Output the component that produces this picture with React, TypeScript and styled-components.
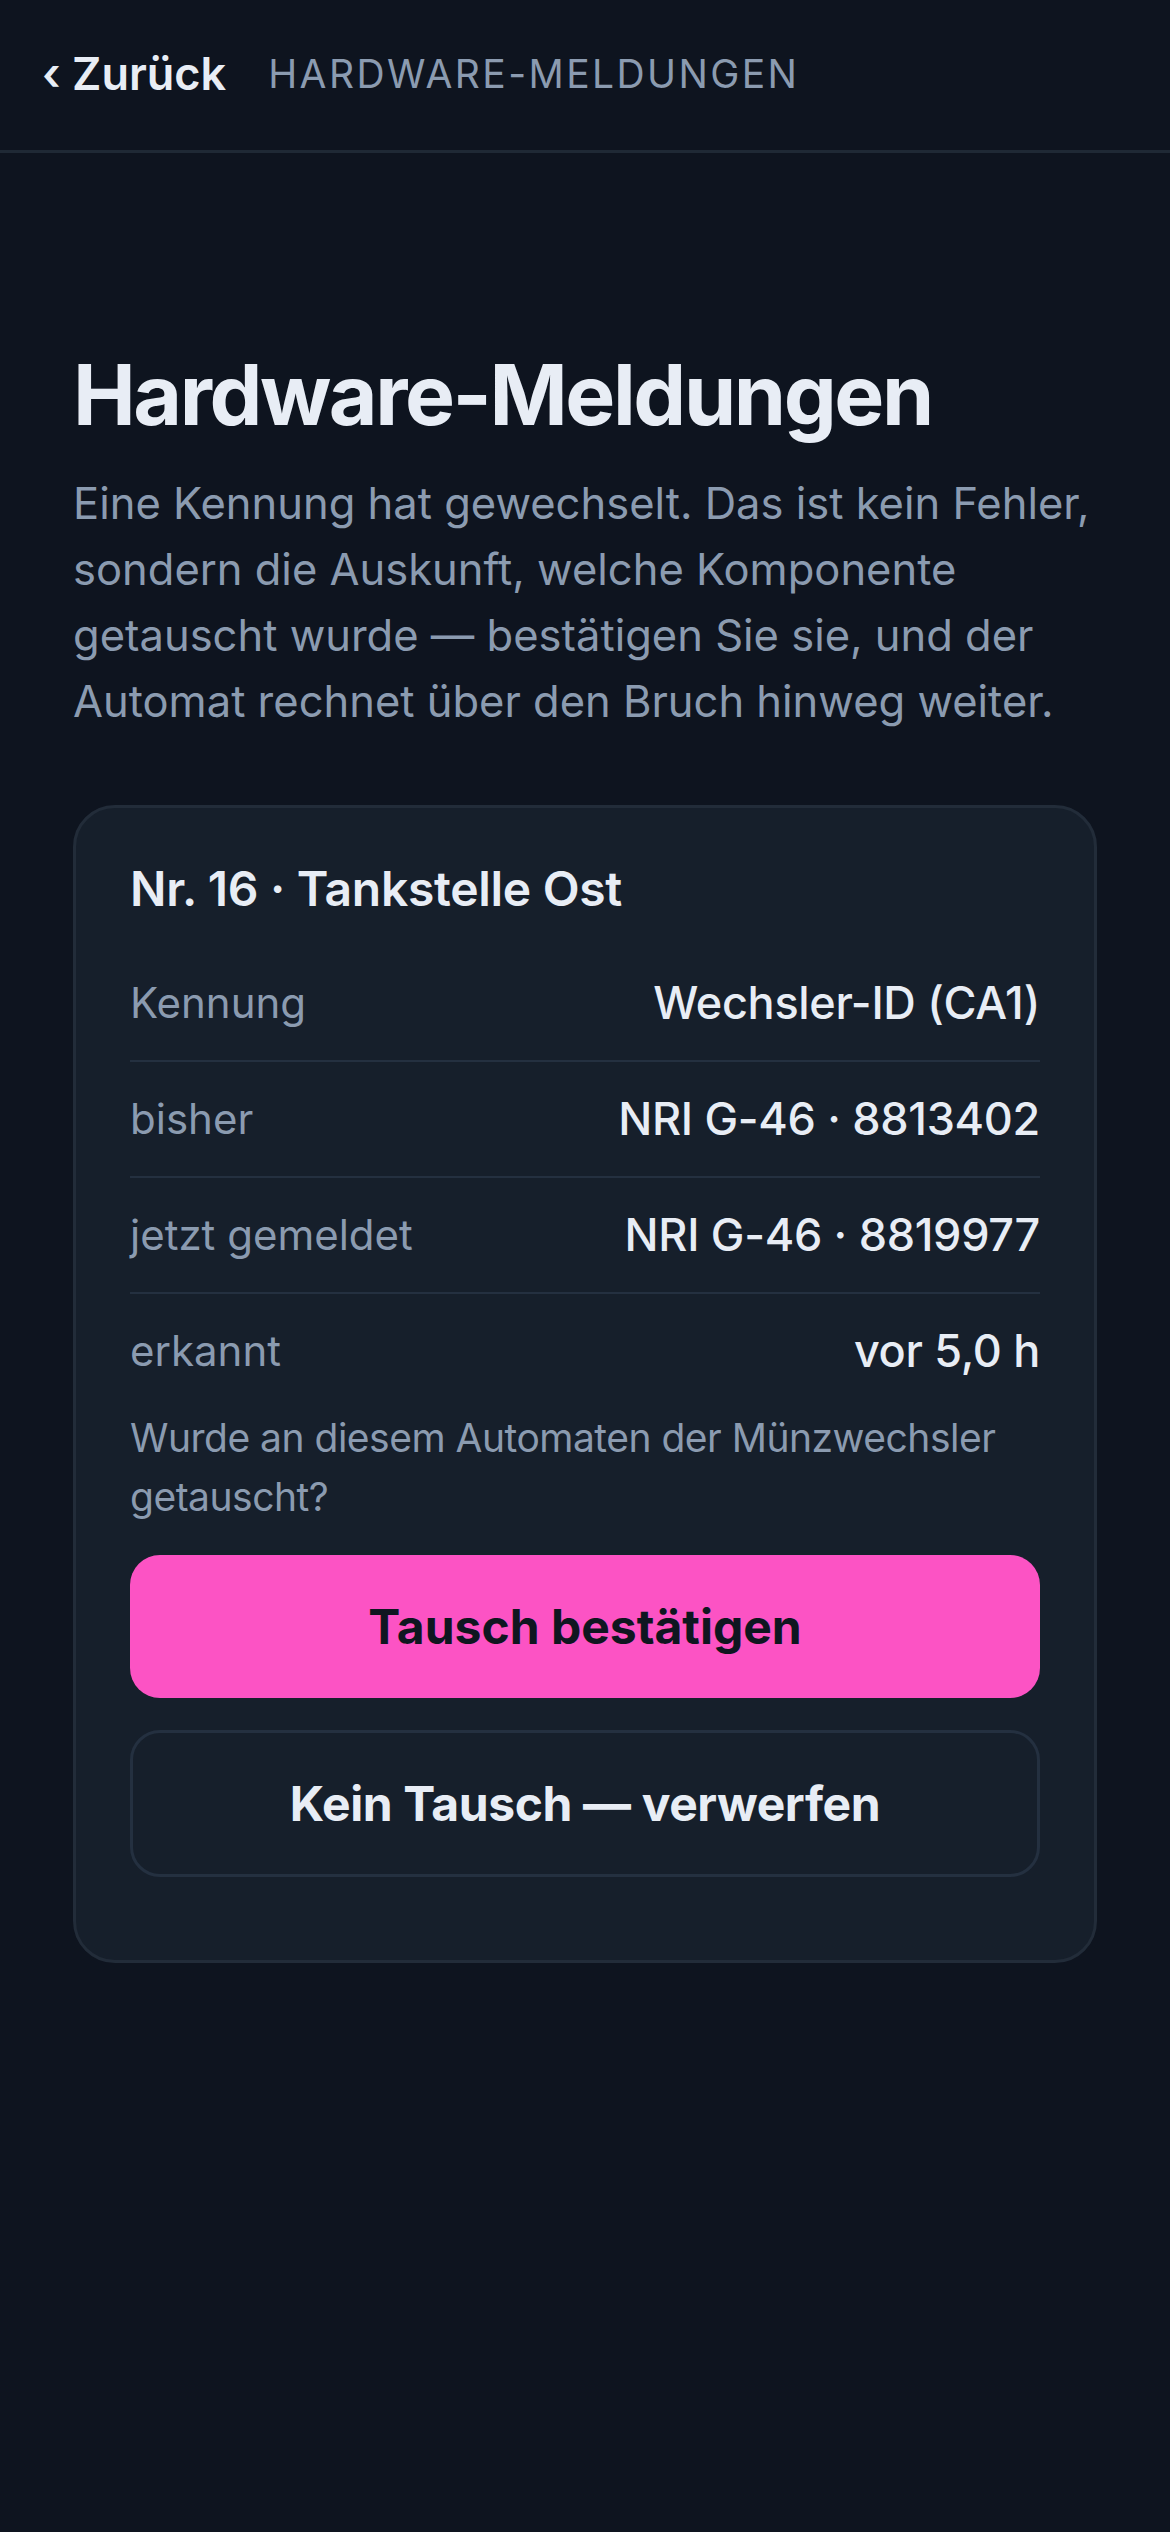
import React from "react";
import styled, { createGlobalStyle } from "styled-components";

const GlobalStyle = createGlobalStyle`
  html, body {
    margin: 0;
    padding: 0;
    background: #0e141f;
  }
  body {
    font-family: Inter, "Noto Sans", "Liberation Sans", sans-serif;
    color: #e8edf5;
    -webkit-font-smoothing: antialiased;
  }
  * {
    box-sizing: border-box;
  }
`;

const Page = styled.div`
  min-height: 2532px;
  background: #0e141f;
`;

const TopBar = styled.header`
  height: 153px;
  display: flex;
  align-items: center;
  gap: 42px;
  padding: 0 42px 3px;
  border-bottom: 3px solid #1f2935;
`;

const BackLink = styled.button`
  border: none;
  background: none;
  padding: 0;
  font-family: inherit;
  font-size: 45px;
  font-weight: 600;
  color: #e8edf5;
  cursor: pointer;
`;

const TopTitle = styled.span`
  font-size: 39px;
  font-weight: 400;
  letter-spacing: 2.4px;
  text-transform: uppercase;
  color: #8b9bb0;
`;

const Main = styled.main`
  padding: 192px 73px 0;
`;

const Heading = styled.h1`
  margin: 0;
  font-size: 84px;
  line-height: 1.2;
  font-weight: 700;
  letter-spacing: -2.4px;
  color: #e8edf5;
`;

const Lead = styled.p`
  margin: 24px 0 0;
  font-size: 43.5px;
  line-height: 66px;
  color: #8b9bb0;
`;

const Card = styled.section`
  margin-top: 71px;
  background: #161f2b;
  border: 3px solid #222c39;
  border-radius: 42px;
  padding: 50px 54px 83px;
`;

const CardTitle = styled.h2`
  margin: 0 0 26px;
  font-size: 48px;
  line-height: 62px;
  font-weight: 600;
  letter-spacing: -0.3px;
  color: #e8edf5;
`;

const Row = styled.div`
  display: flex;
  justify-content: space-between;
  align-items: center;
  padding: 24px 0;
  line-height: 66px;
  border-bottom: 2px solid #243040;

  &:last-of-type {
    border-bottom: none;
  }
`;

const Label = styled.span`
  font-size: 42px;
  color: #8b9bb0;
`;

const Value = styled.span`
  font-size: 45px;
  font-weight: 500;
  letter-spacing: -0.3px;
  color: #e8edf5;
`;

const Question = styled.p`
  margin: 0;
  font-size: 39px;
  line-height: 59px;
  letter-spacing: -0.5px;
  color: #8b9bb0;
`;

const ActionButton = styled.button<{ $primary?: boolean }>`
  display: flex;
  align-items: center;
  justify-content: center;
  width: 100%;
  font-family: inherit;
  font-size: 48px;
  font-weight: 700;
  letter-spacing: ${(p) => (p.$primary ? "0" : "-0.4px")};
  cursor: pointer;
  border-radius: 30px;
  margin-top: ${(p) => (p.$primary ? "29px" : "32px")};
  height: ${(p) => (p.$primary ? "143px" : "147px")};
  background: ${(p) => (p.$primary ? "#fc53c4" : "transparent")};
  color: ${(p) => (p.$primary ? "#0f1620" : "#e8edf5")};
  border: ${(p) => (p.$primary ? "none" : "3px solid #243040")};
`;

const rows = [
  { label: "Kennung", value: "Wechsler-ID (CA1)" },
  { label: "bisher", value: "NRI G-46 · 8813402" },
  { label: "jetzt gemeldet", value: "NRI G-46 · 8819977" },
  { label: "erkannt", value: "vor 5,0 h" },
];

export default function App() {
  return (
    <Page>
      <GlobalStyle />
      <TopBar>
        <BackLink>‹ Zurück</BackLink>
        <TopTitle>Hardware-Meldungen</TopTitle>
      </TopBar>
      <Main>
        <Heading>Hardware-Meldungen</Heading>
        <Lead>
          Eine Kennung hat gewechselt. Das ist kein Fehler, sondern die
          Auskunft, welche Komponente getauscht wurde — bestätigen Sie sie, und
          der Automat rechnet über den Bruch hinweg weiter.
        </Lead>
        <Card>
          <CardTitle>Nr. 16 · Tankstelle Ost</CardTitle>
          <div>
            {rows.map((r) => (
              <Row key={r.label}>
                <Label>{r.label}</Label>
                <Value>{r.value}</Value>
              </Row>
            ))}
          </div>
          <Question>
            Wurde an diesem Automaten der Münzwechsler getauscht?
          </Question>
          <ActionButton $primary>Tausch bestätigen</ActionButton>
          <ActionButton>Kein Tausch — verwerfen</ActionButton>
        </Card>
      </Main>
    </Page>
  );
}
